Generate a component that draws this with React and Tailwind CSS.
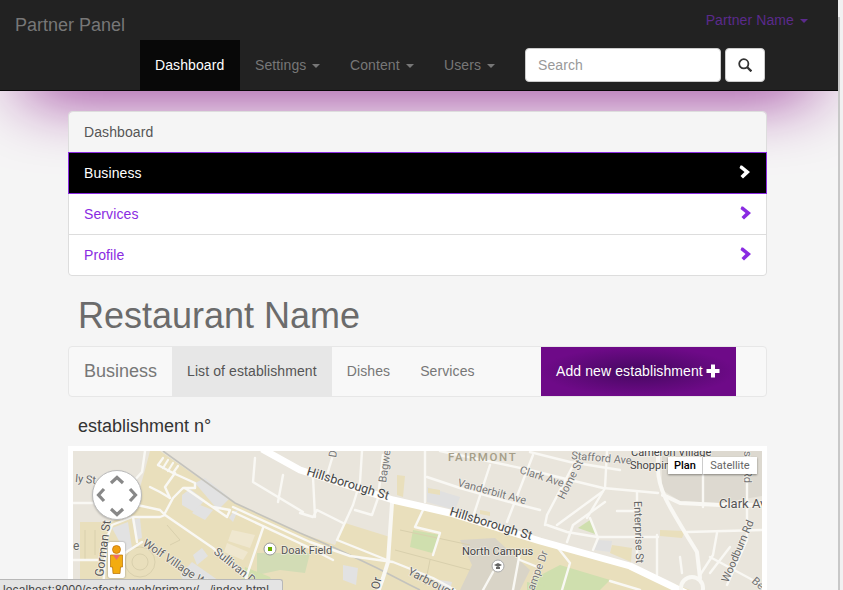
import React from "react";

const font = { fontFamily: '"Liberation Sans", Arial, sans-serif' };

function Caret() {
  return <span className="inline-block w-0 h-0 ml-[2px] align-middle border-x-[4px] border-x-transparent border-t-[4px] border-t-current" />;
}

function Chevron({ color }) {
  return (
    <svg width="12" height="14" viewBox="0 0 12 14" className="mt-[-2px]">
      <path d="M1.5 0.5 L3 0.5 L11 7 L4 13.5 L1.5 11 L5.5 7 L0.5 3 Z" fill={color} />
    </svg>
  );
}

const wide = [
  { w: 7, d: "M262 449 L300 470 L393 500 L450 513 L540 541 L630 566 L690 595" },
];
const medium = [
  "M392 503 L388 562 L383 578 L378 592",
  "M658 451 L658 468 C658 490 668 505 697 552 L700 578",
  "M663 495 L680 503 L720 505 L762 505",
];
const thin = [
  "M145 451 L142 472 L133 482",
  "M73 503 L95 503",
  "M137 505 L160 510 L165 515 L213 548 L247 578 L258 590",
  "M112 525 L132 517 L160 517 L165 515",
  "M112 525 L107 538 L105 560 L103 590",
  "M73 560 L103 560",
  "M133 517 L137 542",
  "M125 553 L142 542",
  "M158 465 L173 473 L195 483 L195 488 L183 488 L173 498 L165 513",
  "M175 473 L165 487 L170 498",
  "M150 487 L160 492 L170 498",
  "M185 488 L227 517 L230 510 L213 507",
  "M233 507 L310 542 L350 556 L393 562 L433 578 L455 590",
  "M233 512 L310 548 L333 560",
  "M263 528 L247 575 L243 590",
  "M255 458 L253 482 L303 512",
  "M283 475 L278 502",
  "M300 513 L313 517 L317 510 L343 523",
  "M362 451 L360 482 L353 505 L337 540 L387 560",
  "M383 455 L378 498 L372 515 L355 510",
  "M333 455 L327 475",
  "M313 477 L315 517",
  "M425 451 L425 502",
  "M427 477 L460 488 L520 505 L540 510",
  "M423 510 L415 527 L440 533 L433 555",
  "M490 465 L473 517",
  "M533 455 L507 522",
  "M440 451 L530 470 L570 480 L603 488 L658 493",
  "M530 452 L570 462 L620 470",
  "M607 451 L605 488 L587 518",
  "M577 458 L547 515 L545 525",
  "M602 492 L557 525",
  "M605 502 L573 525 L567 542",
  "M547 525 L567 532 L597 537 L658 537",
  "M590 518 L598 538 L593 550",
  "M637 492 L637 560",
  "M617 511 L637 511",
  "M703 475 L703 507",
  "M747 451 L747 540",
  "M687 532 L762 530",
  "M657 535 L657 575",
  "M680 557 L682 573",
  "M717 533 L713 555 L700 575",
  "M730 547 L710 573",
  "M747 540 L727 585",
  "M710 557 L762 585",
  "M520 552 L513 590",
  "M493 572 L483 590",
  "M520 560 L540 568",
  "M558 548 L570 563 L562 590",
  "M610 581 L640 590",
];

const labels = [
  ["ly St", 75, 482, 5, 11, "#666"],
  ["e", 73, 550, 0, 12, "#666"],
  ["Gorman St", 103, 577, -82, 12, "#555"],
  ["Wolf Village W", 142, 545, 34, 11.5, "#666"],
  ["Sullivan D", 213, 553, 39, 11.5, "#666"],
  ["Doak Field", 281, 554, 0, 11, "#555"],
  ["Hillsborough St", 306, 475, 17, 12.5, "#444"],
  ["Hillsborough St", 449, 515, 17, 12.5, "#444"],
  ["Bagwe", 386, 483, -82, 11, "#777"],
  ["D", 336, 458, -80, 11, "#777"],
  ["Clark Ave", 519, 473, 18, 11, "#777"],
  ["Vanderbilt Ave", 457, 486, 15, 11, "#777"],
  ["Stafford Ave", 571, 459, 5, 11, "#777"],
  ["Home St", 564, 500, -63, 11, "#777"],
  ["Cameron Village", 631, 456, 0, 11, "#444"],
  ["Shoppin", 630, 469, 0, 11, "#444"],
  ["Enterprise St", 634, 501, 88, 11, "#666"],
  ["Clark Av", 719, 508, 0, 13, "#555"],
  ["Woodburn Rd", 728, 583, -67, 11, "#666"],
  ["Rd", 744, 470, 90, 11, "#777"],
  ["st", 744, 451, 90, 11, "#777"],
  ["Be", 751, 582, 40, 11, "#777"],
  ["North Campus", 462, 555, 0, 11, "#444"],
  ["Yarbrough", 407, 574, 27, 11.5, "#666"],
  ["ampe Dr", 534, 591, -70, 11, "#777"],
  ["Or", 379, 590, -78, 12, "#555"],
];

function MapDrawing() {
  return (
    <svg width="689" height="139" viewBox="73 451 689 139" className="block">
      <rect x="73" y="451" width="689" height="139" fill="#e9e5dc" />
      <path
        d="M160 451 L235 503 L300 533 L335 545 L345 523 L390 537 L393 500 L450 513 L540 541 L630 566 L690 590 L80 590 L80 522 L112 522 L135 505 L145 470 L150 451 Z"
        fill="#e9dfbc"
      />
      <path d="M662 451 L762 451 L762 496 L720 503 L680 501 L662 490 Z" fill="#ddd9d0" />
      <path d="M397 475 L405 476 L403 497 L397 495 Z" fill="#e9dfbc" />
      <path d="M427 487 L460 497 L455 510 L427 502 Z" fill="#e0e0e0" />
      <path d="M428 488 L440 490 L440 495 L428 493 Z" fill="#e9dfbc" />
      <path d="M480 510 L490 512 L490 516 L480 514 Z" fill="#e9dfbc" />
      <path d="M598 540 L612 541 L610 552 L594 550 Z" fill="#e0e0e0" />
      <path d="M612 545 L632 548 L631 562 L610 553 Z" fill="#e9dfbc" />
      <path d="M660 530 L685 531 L682 538 L660 536 Z" fill="#e9dfbc" />
      <path d="M590 520 L598 535 L578 528 Z" fill="#cfdfae" />
      <path d="M460 540 L495 538 L530 570 L520 590 L460 590 L472 565 Z" fill="#d9d4c7" />
      <path d="M257 553 L310 553 L305 573 L280 570 L257 575 Z" fill="#d2dcb5" />
      <path d="M245 567 L270 577 L275 590 L240 590 Z" fill="#d2e0ae" />
      <path d="M413 530 L440 535 L432 553 L410 547 Z" fill="#cfdfae" />
      <path d="M535 578 L560 565 L610 580 L600 590 L530 590 Z" fill="#cfdfae" />
      <path d="M527 582 L545 586 L540 590 L527 590 Z" fill="#cfdfae" />
      {[
        "M132 520 L140 518 L142 538 L136 540 Z",
        "M112 528 L128 522 L132 548 L125 552 Z",
        "M182 495 L190 489 L205 500 L194 512 L182 505 Z",
        "M200 505 L213 510 L205 520 L192 513 Z",
        "M195 483 L205 478 L230 498 L218 510 Z",
        "M193 555 L202 548 L208 556 L197 565 Z",
        "M180 575 L192 562 L225 585 L220 590 L190 590 Z",
        "M233 512 L238 510 L233 522 L229 518 Z",
        "M343 565 L358 568 L356 585 L343 580 Z",
        "M440 580 L452 582 L450 590 L438 590 Z",
      ].map((d) => (
        <path key={d} d={d} fill="#e2e2e2" />
      ))}
      <path d="M232 530 L255 535 L250 548 L228 541 Z" fill="#efe7cf" />
      <path d="M227 543 L248 552 L243 560 L224 552 Z" fill="#efe7cf" />
      <g fill="none" stroke="#d9d0ad" strokeWidth="1">
        <circle cx="140" cy="562" r="8" />
        <circle cx="140" cy="562" r="15" />
        <path d="M85 530 L85 560 M95 530 L95 555 M167 525 L180 540 L170 545 M400 530 L470 545 M395 550 L470 570 M430 560 L425 585" />
      </g>
      <path d="M163 451 L235 503 L300 533 L335 548 L377 568 L410 585 L420 590" fill="none" stroke="#c4c3bd" strokeWidth="1.6" />
      <g fill="none" stroke="#f9f8f4" strokeLinecap="round" strokeLinejoin="round">
        {thin.map((d) => (
          <path key={d} d={d} strokeWidth="2.4" />
        ))}
        <path d="M158 465 L163 458 M163 468 L168 460 M168 471 L173 463 M173 473 L178 466" strokeWidth="2.2" />
        {medium.map((d) => (
          <path key={d} d={d} strokeWidth="4" />
        ))}
        {wide.map((r) => (
          <path key={r.d} d={r.d} strokeWidth={r.w} strokeLinecap="butt" stroke="#fff" />
        ))}
        <circle cx="692" cy="588" r="11" strokeWidth="4" />
      </g>
      <text x="448" y="461" fontFamily="Roboto, sans-serif" fontSize="11.5" letterSpacing="1.6" fontWeight="500" fill="#a59e88">FAIRMONT</text>
      {labels.map(([t, x, y, r, s, c]) => (
        <text
          key={t + x}
          x={x}
          y={y}
          transform={`rotate(${r} ${x} ${y})`}
          fontFamily="Roboto, sans-serif"
          fontSize={s}
          fill={c}
          stroke="#f4f2ec"
          strokeWidth="1.5"
          paintOrder="stroke"
          strokeOpacity="0.75"
        >
          {t}
        </text>
      ))}
      <circle cx="270" cy="549" r="6" fill="#fff" stroke="#999" strokeWidth="1" />
      <rect x="268" y="547" width="4" height="4" fill="#6aab00" />
      <circle cx="498" cy="566" r="6" fill="#fff" stroke="#aaa" strokeWidth="1" />
      <path d="M494 565 L498 563 L502 565 L498 567 Z M496 567 L500 567 L500 569 L496 569 Z" fill="#666" />
    </svg>
  );
}

function PanControl() {
  return (
    <div className="absolute left-[19px] top-[19px] w-[50px] h-[50px] rounded-full bg-white border border-[#bbb] shadow-[0_1px_2px_rgba(0,0,0,0.2)]">
      <svg width="50" height="50" viewBox="0 0 50 50" className="absolute left-[-1px] top-[-1px]">
        <path d="M19 13 L25 7.5 L31 13 M19 39 L25 44.5 L31 39 M12 19 L6.5 25 L12 31 M38 19 L43.5 25 L38 31" fill="none" stroke="#888" strokeWidth="3.2" />
      </svg>
    </div>
  );
}

function Pegman() {
  return (
    <div className="absolute left-[35px] top-[91px] w-[17px] h-[36px] bg-white rounded-[2px] shadow-[0_0_2px_rgba(0,0,0,0.4)]">
      <svg width="17" height="36" viewBox="0 0 17 36">
        <circle cx="8.5" cy="7.5" r="4" fill="#f0a010" stroke="#c07000" strokeWidth="0.7" />
        <path d="M2.5 13 L14.5 13 L14.5 25 L12.5 25 L12 31.5 L5 31.5 L4.5 25 L2.5 25 Z" fill="#f3ac10" stroke="#b87000" strokeWidth="0.7" />
        <path d="M5 13 L12 13 L8.5 18 Z" fill="#ee6a6a" />
      </svg>
    </div>
  );
}

function MapType() {
  return (
    <div
      className="absolute right-[5px] top-[6px] flex h-[17px] bg-white text-[11px] leading-[17px] shadow-[0_1px_2px_rgba(0,0,0,0.4)]"
      style={{ fontFamily: "Roboto, sans-serif" }}
    >
      <div className="w-[35px] text-center text-black font-medium border-r border-[#ccc]">Plan</div>
      <div className="w-[54px] text-center text-[#666]">Satellite</div>
    </div>
  );
}

function NavItem({ children, width }) {
  return (
    <div className={`${width} pl-[15px] h-[50px] leading-[50px] text-[14px] tracking-[0.1px] text-[#777] whitespace-nowrap`}>
      {children} <Caret />
    </div>
  );
}

function ListItem({ children, color, className }) {
  return (
    <div className={`flex items-center justify-between pl-[15px] pr-[14px] bg-white text-[14px] tracking-[0.1px] ${className}`} style={{ color }}>
      <span>{children}</span>
      <Chevron color={color} />
    </div>
  );
}

export default function App() {
  return (
    <div className="relative flex h-[590px] w-[843px] overflow-hidden bg-[#f5f5f5]" style={font}>
      <div className="relative w-[838px] shrink-0">
        <div className="absolute left-[25px] right-[25px] top-[40px] h-[51px] shadow-[0_0_70px_rgba(128,0,128,1)]" />

        <header className="relative h-[91px] bg-[#222] border-b border-[#080808]">
          <div className="flex justify-between h-[40px]">
            <div className="pl-[15px] mt-[5px] text-[18px] leading-[40px] text-[#777]">Partner Panel</div>
            <div className="pr-[30px] text-[14px] tracking-[0.1px] leading-[40px] text-[#5b2a8c]">
              Partner Name <Caret />
            </div>
          </div>
          <div className="flex w-[765px] pl-[140px] h-[50px]">
            <div className="w-[100px] pl-[15px] h-[50px] leading-[50px] text-[14px] tracking-[0.1px] text-white bg-[#080808]">Dashboard</div>
            <NavItem width="w-[95px]">Settings</NavItem>
            <NavItem width="w-[94px]">Content</NavItem>
            <NavItem width="w-[80px]">Users</NavItem>
            <div className="flex mt-[8px] ml-auto gap-[4px] h-[34px]">
              <div className="w-[196px] px-[12px] bg-white border border-[#ccc] rounded-[4px] text-[14px] leading-[32px] tracking-[0.1px] text-[#999]">Search</div>
              <div className="flex items-center justify-center w-[40px] bg-white border border-[#ccc] rounded-[4px]">
                <svg width="14" height="14" viewBox="0 0 14 14" fill="none" stroke="#333">
                  <circle cx="5.8" cy="5.8" r="4.6" strokeWidth="1.8" />
                  <path d="M9 9 L13.4 13.4" strokeWidth="2.3" />
                </svg>
              </div>
            </div>
          </div>
        </header>

        <main className="relative ml-[68px] w-[699px] pt-[20px]">
          <section className="rounded-[4px] border border-[#ddd]">
            <div className="h-[40px] pl-[15px] bg-[#f5f5f5] rounded-t-[4px] text-[14px] tracking-[0.1px] leading-[40px] text-[#555]">Dashboard</div>
            <div className="flex items-center justify-between h-[42px] pl-[15px] pr-[15px] bg-black border border-[#8a2be2] mx-[-1px] text-[14px] tracking-[0.1px] text-white">
              <span>Business</span>
              <Chevron color="#fff" />
            </div>
            <ListItem color="#8a2be2" className="h-[41px] border-b border-[#ddd]">
              Services
            </ListItem>
            <ListItem color="#8a2be2" className="h-[40px] rounded-b-[4px]">
              Profile
            </ListItem>
          </section>

          <h1 className="h-[70px] pl-[10px] pt-[20px] text-[36px] leading-[40px] text-[#6b6b6b]">Restaurant Name</h1>

          <nav className="flex h-[51px] bg-[#f8f8f8] border border-[#e7e7e7] rounded-[4px]">
            <div className="pl-[15px] w-[103px] text-[18px] leading-[49px] text-[#777]">Business</div>
            <div className="px-[15px] text-[14px] tracking-[0.1px] leading-[49px] text-[#555] bg-[#e7e7e7]">List of establishment</div>
            <div className="px-[15px] text-[14px] tracking-[0.1px] leading-[49px] text-[#777]">Dishes</div>
            <div className="px-[15px] text-[14px] tracking-[0.1px] leading-[49px] text-[#777]">Services</div>
            <div className="flex items-center gap-[3px] ml-auto mr-[30px] w-[195px] pl-[15px] text-[14px] tracking-[0.1px] text-white bg-[radial-gradient(ellipse_closest-side_at_center,#450860_0%,#6e0a88_100%)]">
              Add new establishment
              <svg width="14" height="14" viewBox="0 0 14 14" className="mt-[-1px]">
                <path d="M5 0.5 H9 V5 H13.5 V9 H9 V13.5 H5 V9 H0.5 V5 H5 Z" fill="#fff" />
              </svg>
            </div>
          </nav>

          <h4 className="h-[49px] pl-[10px] pt-[19px] text-[18px] leading-[20px] text-[#333]">establishment n°</h4>

          <div className="relative border-x-[5px] border-t-[5px] border-white">
            <MapDrawing />
            <PanControl />
            <Pegman />
            <MapType />
          </div>
        </main>
      </div>

      <div className="relative w-[5px] bg-[#f1f1f1]">
        <div className="absolute left-0 top-[17px] bottom-0 w-[2px] bg-[#c8c8c8]" />
      </div>

      <div className="absolute left-0 bottom-0 w-[283px] h-[11px] overflow-hidden bg-[#e4e4e4] border-t border-r border-[#b8b8b8] rounded-tr-[3px] pl-[3px] pt-[3px] text-[12px] tracking-[0.12px] leading-[14px] text-[#444] whitespace-nowrap">
        localhost:8000/cafesto-web/primary/.../index.html
      </div>
    </div>
  );
}
